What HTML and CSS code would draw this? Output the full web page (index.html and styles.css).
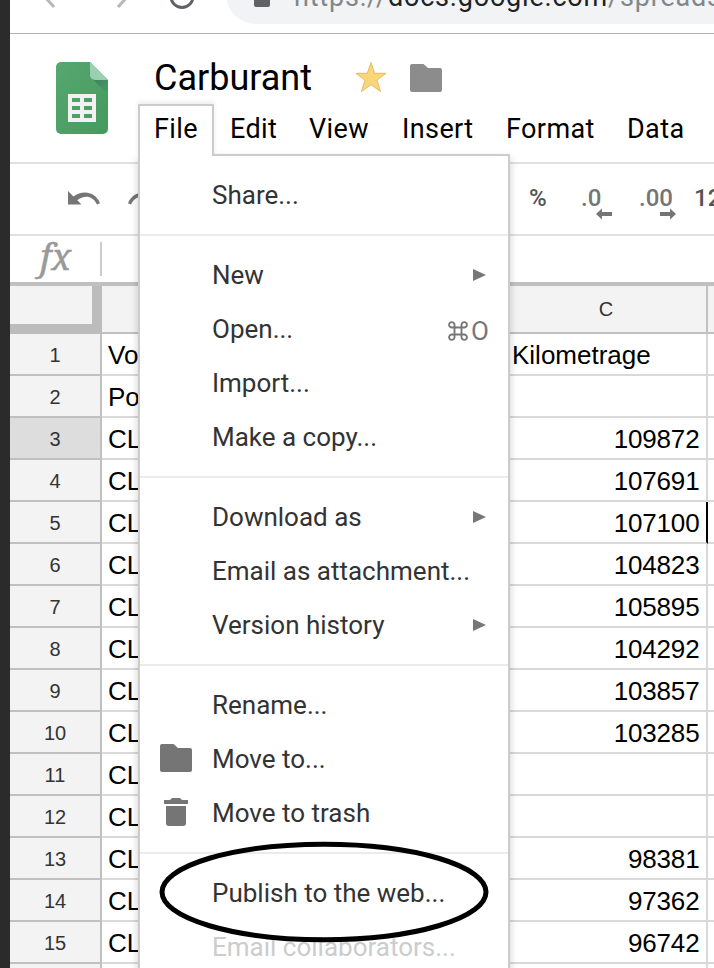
FILE: index.html
```html
<!DOCTYPE html>
<html lang="en">
<head>
<meta charset="utf-8">
<title>Carburant</title>
<link rel="stylesheet" href="styles.css">
</head>
<body>
<div class="desktop">
<main class="window">
  <div class="browser-bar">
    <svg class="nav-icons" width="200" height="33" viewBox="0 0 200 33" fill="none" stroke-width="3"><path stroke="#b6b8ba" d="M34-4 44 7M118-4 108 7"/><circle cx="172" cy="-3.500" r="11" stroke="#5f6368"/></svg>
    <div class="address"><span class="lock"></span><span class="url">https://<b>docs.google.com</b><i>/spreads</i></span></div>
  </div>
  <header class="header">
    <svg class="logo" width="52" height="72" viewBox="0 0 52 72">
      <defs>
        <linearGradient id="page" x1="0" y1="0" x2="1" y2="1"><stop offset="0" stop-color="#57a770"/><stop offset="1" stop-color="#459a5e"/></linearGradient>
        <linearGradient id="fold" x1="0" y1="0" x2="1" y2="1"><stop offset="0" stop-color="#3a8160"/><stop offset="1" stop-color="#4a9d65"/></linearGradient>
      </defs>
      <path fill="url(#page)" d="M5 0H34L52 18V67a5 5 0 0 1-5 5H5a5 5 0 0 1-5-5V5a5 5 0 0 1 5-5Z"/>
      <path fill="url(#fold)" d="M36 16.500 52 32V18Z"/>
      <path fill="#9ccfb0" d="M34 0 52 18H39a5 5 0 0 1-5-5Z"/>
      <path fill="#f1f1f1" fill-rule="evenodd" d="M12 32H40V60H12ZM16 36v4h8v-4ZM28 36v4h8v-4ZM16 44v4h8v-4ZM28 44v4h8v-4ZM16 52v4h8v-4ZM28 52v4h8v-4Z"/>
    </svg>
    <div class="heading">
      <div class="title-row">
        <h1 class="title">Carburant</h1>
        <svg class="star" width="32" height="32" viewBox="0 0 32 32"><path fill="#f9d67a" stroke="#e3bd62" stroke-width="1" d="M16 1.500 19.700 12.300H31L22 19.100 25.500 30.500 16 23.700 6.500 30.500 10 19.100 1 12.300H12.300Z"/></svg>
        <svg class="folder" width="32" height="28" viewBox="0 0 32 28"><path fill="#8c8c8c" d="M2 0H13.500L18 4H30a2 2 0 0 1 2 2V26a2 2 0 0 1-2 2H2a2 2 0 0 1-2-2V2a2 2 0 0 1 2-2Z"/></svg>
      </div>
      <nav class="menubar"><span>File</span><span>Edit</span><span>View</span><span>Insert</span><span>Format</span><span>Data</span></nav>
    </div>
  </header>
  <div class="toolbar">
    <svg class="undo" width="90" height="20" viewBox="0 0 90 20"><path fill="#757575" d="M0 0V13.500H13.500L9.300 9.300C16 3.500 25 4.500 29 13.500L32 12.200C27 0 14-1 5.500 5.500Z"/><path fill="#757575" d="M92 13.500V0L86.500 5.500C78-1 65 0 60 12.200L63 13.500C67 4.500 76 3.500 82.700 9.300L78.500 13.500Z"/></svg>
    <div class="formats">
      <span class="percent">%</span>
      <span class="decimal less">.0<svg width="16" height="12" viewBox="0 0 16 12"><path fill="#757575" d="M0 6 6 .5V4H16V8H6v3.500Z"/></svg></span>
      <span class="decimal more">.00<svg width="16" height="12" viewBox="0 0 16 12"><path fill="#757575" d="M16 6 10 .5V4H0V8H10v3.500Z"/></svg></span>
      <span class="number">12</span>
    </div>
  </div>
  <div class="formula"><span class="fx">fx</span></div>
  <div class="sheet">
    <div class="row head"><div class="corner"></div><div class="a"></div><div class="c">C</div><div class="d"></div></div>
    <div class="row"><div class="n">1</div><div class="a">Vo</div><div class="c text">Kilometrage</div><div class="d"></div></div>
    <div class="row"><div class="n">2</div><div class="a">Po</div><div class="c"></div><div class="d"></div></div>
    <div class="row"><div class="n on">3</div><div class="a">CL</div><div class="c">109872</div><div class="d"></div></div>
    <div class="row"><div class="n">4</div><div class="a">CL</div><div class="c">107691</div><div class="d"></div></div>
    <div class="row"><div class="n">5</div><div class="a">CL</div><div class="c cursor">107100</div><div class="d"></div></div>
    <div class="row"><div class="n">6</div><div class="a">CL</div><div class="c">104823</div><div class="d"></div></div>
    <div class="row"><div class="n">7</div><div class="a">CL</div><div class="c">105895</div><div class="d"></div></div>
    <div class="row"><div class="n">8</div><div class="a">CL</div><div class="c">104292</div><div class="d"></div></div>
    <div class="row"><div class="n">9</div><div class="a">CL</div><div class="c">103857</div><div class="d"></div></div>
    <div class="row"><div class="n">10</div><div class="a">CL</div><div class="c">103285</div><div class="d"></div></div>
    <div class="row"><div class="n">11</div><div class="a">CL</div><div class="c"></div><div class="d"></div></div>
    <div class="row"><div class="n">12</div><div class="a">CL</div><div class="c"></div><div class="d"></div></div>
    <div class="row"><div class="n">13</div><div class="a">CL</div><div class="c">98381</div><div class="d"></div></div>
    <div class="row"><div class="n">14</div><div class="a">CL</div><div class="c">97362</div><div class="d"></div></div>
    <div class="row"><div class="n">15</div><div class="a">CL</div><div class="c">96742</div><div class="d"></div></div>
    <div class="row"><div class="n"></div><div class="a"></div><div class="c"></div><div class="d"></div></div>
  </div>
</main>
<div class="tab">File</div>
<div class="menu">
  <div class="group"><div class="item">Share...</div></div>
  <div class="group">
    <div class="item">New<span class="arrow"></span></div>
    <div class="item">Open...<span class="key"><svg width="20" height="20" viewBox="0 0 20 20" fill="none" stroke="#777" stroke-width="1.900"><path d="M6.500 6.500H4a2.700 2.700 0 1 1 2.500-2.700V16.200A2.700 2.700 0 1 1 4 13.500H16a2.700 2.700 0 1 1-2.500 2.700V3.800A2.700 2.700 0 1 1 16 6.500Z"/></svg>O</span></div>
    <div class="item">Import...</div>
    <div class="item">Make a copy...</div>
  </div>
  <div class="group">
    <div class="item">Download as<span class="arrow"></span></div>
    <div class="item">Email as attachment...</div>
    <div class="item">Version history<span class="arrow"></span></div>
  </div>
  <div class="group">
    <div class="item">Rename...</div>
    <div class="item"><svg class="glyph" width="32" height="28" viewBox="0 0 32 28"><path fill="#757575" d="M2 0H13.500L18 4H30a2 2 0 0 1 2 2V26a2 2 0 0 1-2 2H2a2 2 0 0 1-2-2V2a2 2 0 0 1 2-2Z"/></svg>Move to...</div>
    <div class="item"><svg class="glyph" width="32" height="28" viewBox="0 0 32 28"><path fill="#757575" d="M4 2H10L12 0H20L22 2H28V6H4ZM6 8H26V25a3 3 0 0 1-3 3H9a3 3 0 0 1-3-3Z"/></svg>Move to trash</div>
  </div>
  <div class="group">
    <div class="item">Publish to the web...</div>
    <div class="item disabled">Email collaborators...</div>
  </div>
</div>
<svg class="ring" width="330" height="102" viewBox="0 0 330 102"><ellipse cx="165" cy="51" rx="162" ry="47.700" fill="none" stroke="#000" stroke-width="5"/></svg>
</div>
</body>
</html>
```
FILE: styles.css
```css
* { box-sizing: border-box; }
body { margin: 0; font-family: Roboto, sans-serif; color: #000; background: #fff; }
.desktop { position: relative; width: 714px; height: 968px; overflow: hidden; padding-left: 10px; background: #2b2b2b; }
.window { height: 968px; background: #fff; overflow: hidden; }

.browser-bar { display: flex; height: 34px; border-bottom: 1px solid #b1b1b1; overflow: hidden; }
.nav-icons { flex: none; }
.address { display: flex; flex: none; width: 560px; height: 60px; margin: -36px 0 0 16px; border-radius: 30px; background: #f1f3f4; padding: 18px 0 0 28px; }
.lock { flex: none; width: 16px; height: 16px; border-radius: 2px; background: #5f6368; margin-top: 9px; }
.url { margin-left: 24px; font-size: 27px; line-height: 30px; letter-spacing: .8px; color: #80868b; white-space: nowrap; }
.url b { font-weight: 400; color: #202124; }
.url i { font-style: normal; }

.header { display: flex; height: 130px; border-bottom: 2px solid #e0e0e0; padding-left: 46px; }
.logo { flex: none; margin-top: 28px; }
.heading { margin-left: 46px; }
.title-row { display: flex; height: 68px; align-items: center; padding-top: 20px; }
.title { margin: 0; width: 202px; font-size: 36px; font-weight: 400; line-height: 46px; }
.star { margin: -3px 0 0 -1px; }
.folder { margin-left: 23px; }
.menubar { display: grid; grid-template-columns: 76px 79px 93px 104px 121px 80px; font-size: 27px; line-height: 32px; margin-top: 11px; letter-spacing: .4px; }

.toolbar { display: flex; justify-content: space-between; height: 72px; border-bottom: 2px solid #e0e0e0; padding-left: 58px; color: #555; font-weight: 500; }
.undo { margin-top: 27px; flex: none; }
.formats { display: grid; grid-template-columns: 52px 58px 55px 20px; line-height: 28px; padding-top: 20px; font-size: 24px; overflow: hidden; }
.decimal { display: flex; flex-direction: column; height: 40px; color: #757575; }
.decimal svg { margin: -4px 0 0 15px; }
.decimal.more svg { margin-left: 21px; }

.formula { height: 46px; padding: 6px 0 0 30px; }
.fx { display: block; width: 62px; height: 34px; border-right: 2px solid #ccc; font: italic 36px/30px "Noto Serif", "DejaVu Serif", "Liberation Serif", serif; color: #999; -webkit-text-stroke: .5px #999; }

.sheet { border-top: 4px solid #c0c0c0; font: 26px/42px "Liberation Sans", Arial, sans-serif; }
.row { display: grid; grid-template-columns: 92px 406px 200px 6px; height: 42px; }
.row > div { border-right: 2px solid #d9d9d9; border-bottom: 2px solid #d9d9d9; overflow: hidden; white-space: nowrap; }
.row > .d { border-right: 0; }
.a { padding-left: 6px; }
.c { padding-right: 6.5px; text-align: right; letter-spacing: -.15px; }
.text { text-align: left; padding-left: 4px; letter-spacing: 0; }
.row > .n { border-color: #c0c0c0; background: #f3f3f3; color: #333; font-size: 20px; text-align: center; }
.row > .on { background: #ddd; }
.row > .cursor { border-right-color: #000; }
.row.head { height: 48px; }
.row.head > div { border-color: #c0c0c0; background: #f3f3f3; }
.head .c { color: #333; font-size: 20px; line-height: 46px; text-align: center; padding: 0 2px 0 0; }
.row.head > .corner { border-right: 10px solid #bcbcbc; border-bottom: 10px solid #bcbcbc; }

.menu { position: absolute; left: 138px; top: 154px; width: 372px; height: 830px; padding-top: 12px; background: #fff; border: 2px solid #ccc; box-shadow: 0 4px 8px rgba(0,0,0,.2); }
.tab { position: absolute; z-index: 2; left: 138px; top: 104px; width: 76px; height: 52px; padding-left: 14px; background: #fff; border: 2px solid #ccc; border-bottom: 0; font-size: 27px; line-height: 46px; letter-spacing: .4px; box-shadow: 0 -2px 5px rgba(0,0,0,.08); clip-path: inset(-6px -6px 0 -6px); }
.group + .group { border-top: 2px solid #ebebeb; margin-top: 12px; padding-top: 12px; }
.item { position: relative; display: flex; align-items: center; height: 54px; padding: 0 20px 0 72px; font-size: 26px; color: #333; white-space: nowrap; }
.glyph { position: absolute; left: 20px; top: 12px; }
.arrow { margin: 0 2px 0 auto; border-left: 13px solid #777; border-top: 6.5px solid transparent; border-bottom: 6.5px solid transparent; }
.key { display: flex; align-items: center; gap: 3px; margin: 3px -1px 0 auto; color: #777; }
.disabled { color: #ccc; }
.ring { position: absolute; z-index: 3; left: 158.500px; top: 841px; }
```
